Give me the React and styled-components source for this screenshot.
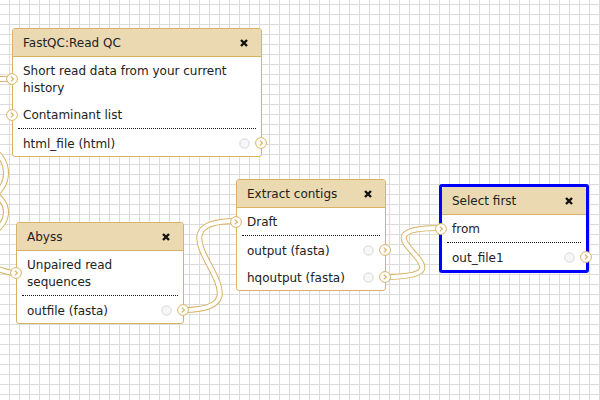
import React from "react";
import styled, { createGlobalStyle } from "styled-components";

const GlobalStyle = createGlobalStyle`
  html, body {
    margin: 0;
    padding: 0;
  }
  body {
    font-family: "DejaVu Sans", Verdana, sans-serif;
    font-size: 12px;
    line-height: 17px;
    color: #222;
  }
`;

const TAN = "#d8b365";

const Canvas = styled.div`
  position: relative;
  width: 600px;
  height: 400px;
  overflow: hidden;
  background-color: #fff;
  background-image: linear-gradient(to right, #dcdcdc 1px, transparent 1px),
    linear-gradient(to bottom, #dcdcdc 1px, transparent 1px);
  background-size: 10px 10px;
  background-position: 9px 4px;
`;

const Wires = styled.svg`
  position: absolute;
  left: 0;
  top: 0;
  width: 600px;
  height: 400px;
`;

const Node = styled.div`
  position: absolute;
  box-sizing: border-box;
  background: #fff;
  border: ${(p) => (p.$active ? "3px solid #0000ff" : `1px solid ${TAN}`)};
  border-radius: 3px;
`;

const Title = styled.div`
  display: flex;
  align-items: center;
  justify-content: space-between;
  padding: 6px 10px 4px;
  background: #ebd9b2;
  border-bottom: 1px solid ${TAN};
  border-radius: 2px 2px 0 0;
`;

const Close = styled.svg`
  width: 8px;
  height: 8px;
  margin-right: 3px;
  margin-top: -1px;
  flex: none;
`;

const Row = styled.div`
  position: relative;
  display: flex;
  align-items: center;
  justify-content: space-between;
  padding: ${(p) => (p.$out ? "7px 10px 3px" : "6px 10px 4px")};
`;

const Rule = styled.div`
  margin: 0 5px;
  border-top: 1px dotted #111;
`;

const Callout = styled.svg`
  width: 11px;
  height: 11px;
  margin-right: 1px;
  margin-top: -3px;
  flex: none;
`;

const Terminal = styled.svg`
  position: absolute;
  top: 50%;
  margin-top: -6px;
  width: 12px;
  height: 12px;
  ${(p) => (p.$side === "in" ? "left: -7px;" : "right: -6px;")}
`;

const nodes = [
  {
    title: "FastQC:Read QC",
    x: 12,
    y: 28,
    w: 250,
    inputs: ["Short read data from your current history", "Contaminant list"],
    outputs: ["html_file (html)"],
  },
  {
    title: "Abyss",
    x: 16,
    y: 222,
    w: 168,
    inputs: ["Unpaired read sequences"],
    outputs: ["outfile (fasta)"],
  },
  {
    title: "Extract contigs",
    x: 236,
    y: 179,
    w: 150,
    inputs: ["Draft"],
    outputs: ["output (fasta)", "hqoutput (fasta)"],
  },
  {
    title: "Select first",
    x: 439,
    y: 184,
    w: 150,
    active: true,
    inputs: ["from"],
    outputs: ["out_file1"],
  },
];

// connector paths, bezier with 100px handles like the editor draws them
const links = [
  "M -20 79 L 12 79",
  "M -12 148 C 12 156 12 190 -12 198",
  "M -12 192 C 12 198 12 226 -12 234",
  "M -20 266 C 0 267 4 273 16 273",
  "M 183 310 C 283 310 136 221 236 221",
  "M 385 277 C 485 277 341 228 441 228",
];

function Term({ side }) {
  return (
    <Terminal $side={side} viewBox="0 0 12 12">
      <circle cx="6" cy="6" r="5.4" fill="#fff" stroke={TAN} strokeWidth="1" />
      <polyline
        points="4.8,3.6 7.4,6 4.8,8.4"
        fill="none"
        stroke={TAN}
        strokeWidth="1.2"
      />
    </Terminal>
  );
}

function CalloutMark() {
  return (
    <Callout viewBox="0 0 11 11">
      <polygon
        points="3.5,1 7.5,1 10,3.5 10,7.5 7.5,10 3.5,10 1,7.5 1,3.5"
        fill="#f7f7f7"
        stroke="#d6d6d6"
        strokeWidth="1"
      />
    </Callout>
  );
}

function ToolNode({ node }) {
  return (
    <Node $active={node.active} style={{ left: node.x, top: node.y, width: node.w }}>
      <Title>
        <span>{node.title}</span>
        <Close viewBox="0 0 8 8">
          <path d="M1 1 L7 7 M7 1 L1 7" stroke="#111" strokeWidth="2.4" />
        </Close>
      </Title>
      {node.inputs.map((label) => (
        <Row key={label}>
          <Term side="in" />
          <span>{label}</span>
        </Row>
      ))}
      <Rule />
      {node.outputs.map((label) => (
        <Row key={label} $out>
          <span>{label}</span>
          <CalloutMark />
          <Term side="out" />
        </Row>
      ))}
    </Node>
  );
}

export default function App() {
  return (
    <>
      <GlobalStyle />
      <Canvas>
        <Wires viewBox="0 0 600 400">
          {links.map((d) => (
            <g key={d} fill="none">
              <path d={d} stroke={TAN} strokeWidth="6" />
              <path d={d} stroke="#fff" strokeWidth="4" />
            </g>
          ))}
        </Wires>
        {nodes.map((n) => (
          <ToolNode key={n.title} node={n} />
        ))}
      </Canvas>
    </>
  );
}
